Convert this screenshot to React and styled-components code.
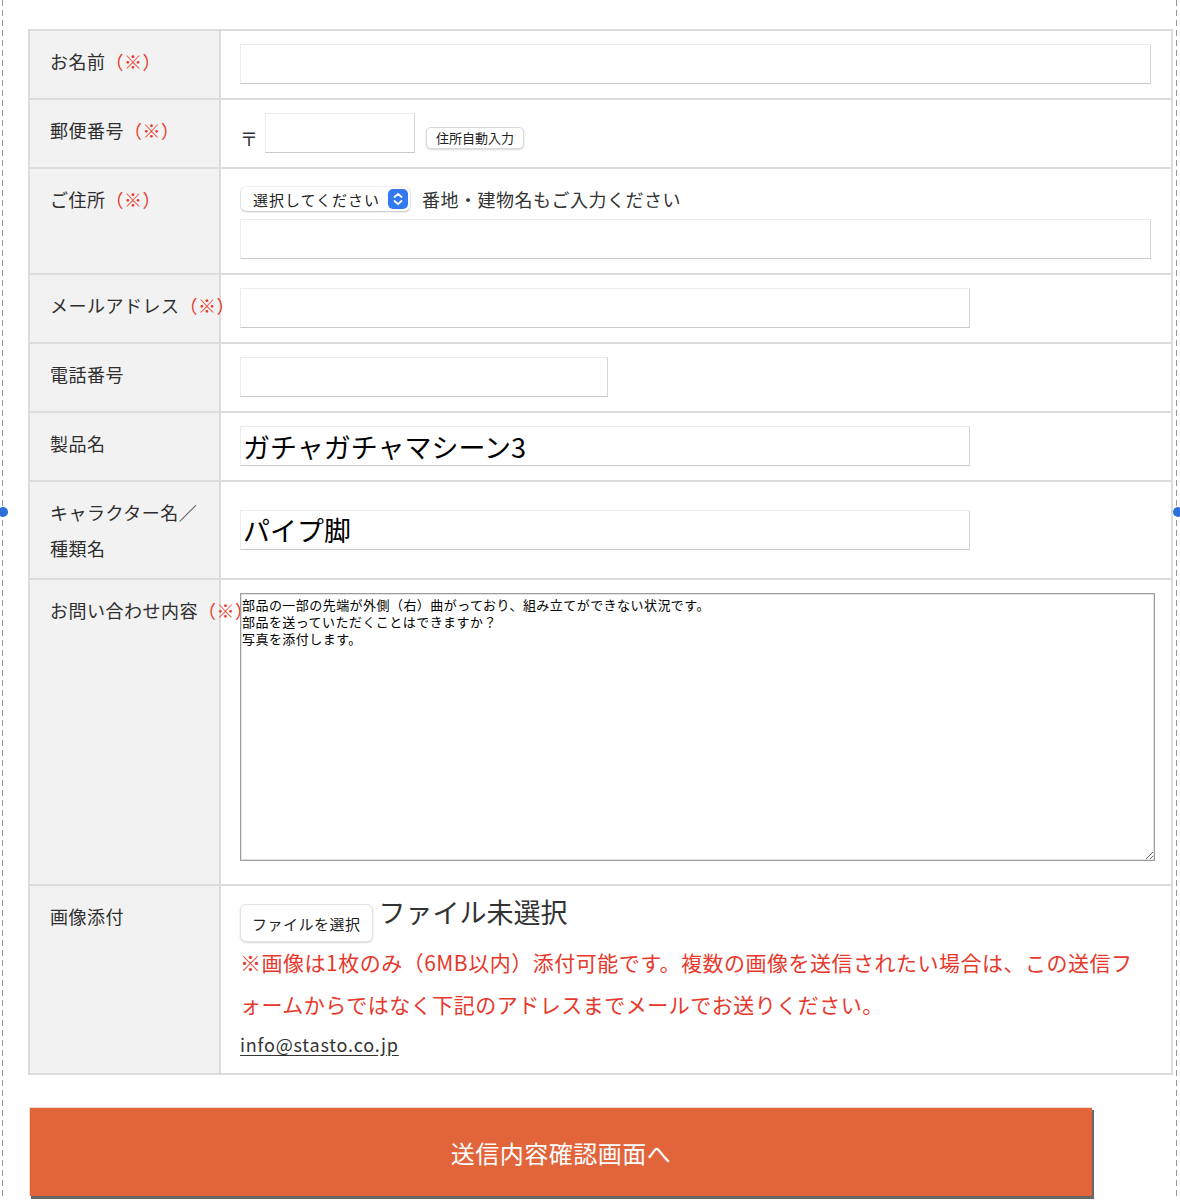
import React from "react";
import styled, { createGlobalStyle } from "styled-components";

const GlobalStyle = createGlobalStyle`
  html, body {
    margin: 0;
    padding: 0;
    background: #fff;
  }
  body {
    font-family: "Noto Sans CJK JP", "Noto Sans", sans-serif;
    color: #333;
  }
`;

const Page = styled.div`
  position: relative;
  box-sizing: border-box;
  width: 1175px;
  min-height: 1200px;
  margin-left: 2px;
  padding: 29px 0 0 26px;
  background:
    linear-gradient(#9a9a9a 60%, transparent 0) left top / 1px 10px repeat-y,
    linear-gradient(#9a9a9a 60%, transparent 0) right top / 1px 10px repeat-y;
`;

const Handle = styled.span`
  position: absolute;
  top: 507px;
  left: ${(p) => (p.$right ? "1171px" : "-4px")};
  width: 10px;
  height: 10px;
  border-radius: 50%;
  background: #2d6fd8;
`;

const FormTable = styled.div`
  box-sizing: border-box;
  width: 1145px;
  border-top: 2px solid #dcdcdc;
  border-left: 2px solid #dcdcdc;
  border-right: 2px solid #dcdcdc;
`;

const Row = styled.div`
  display: grid;
  grid-template-columns: 191px 1fr;
  border-bottom: 2px solid #dcdcdc;
`;

const Label = styled.div`
  box-sizing: border-box;
  background: #f2f2f2;
  border-right: 2px solid #dcdcdc;
  padding: 12px 20px;
  font-size: 18px;
  line-height: 36px;
  letter-spacing: 0.5px;
  color: #2e2e2e;
  white-space: nowrap;
  position: relative;
  z-index: 0;
`;

const Req = styled.span`
  color: #e8382b;
`;

const Cell = styled.div`
  padding: 13px 20px 14px 19px;
  display: flex;
  flex-direction: column;
  justify-content: ${(p) => (p.$top ? "flex-start" : "center")};
  align-items: flex-start;
  position: relative;
  z-index: 1;
  min-width: 0;
`;

const Inline = styled.div`
  display: flex;
  align-items: ${(p) => p.$align || "center"};
`;

const TextInput = styled.input`
  box-sizing: border-box;
  width: ${(p) => p.$w || "100%"};
  height: 40px;
  margin: 0;
  padding: 0 2px;
  border: 1px solid #ececec;
  border-bottom-color: #c9c9c9;
  border-right-color: #d6d6d6;
  background: #fff;
  font-family: "Noto Sans CJK JP", sans-serif;
  font-size: ${(p) => p.$fs || 18}px;
  color: #000;
  outline: none;
`;

const Postal = styled.span`
  font-size: 18px;
  line-height: 18px;
  margin: 0 7px 6px 0;
  color: #333;
`;

const SmallButton = styled.button`
  margin: 0 0 4px 11px;
  height: 22px;
  padding: 0 9px;
  border: 1px solid #d9d9d9;
  border-radius: 5px;
  background: #fff;
  box-shadow: 0 1px 2px rgba(0, 0, 0, 0.15);
  font-family: "Noto Sans CJK JP", sans-serif;
  font-size: 13px;
  color: #222;
  line-height: 20px;
`;

const SelectBox = styled.div`
  box-sizing: border-box;
  display: flex;
  align-items: center;
  justify-content: space-between;
  height: 24px;
  width: 169px;
  margin-left: 1px;
  padding: 0 2px 0 12px;
  border-radius: 5px;
  background: #fff;
  box-shadow: 0 0 0 0.5px rgba(0, 0, 0, 0.12), 0 1px 2px rgba(0, 0, 0, 0.2);
  font-size: 15px;
  letter-spacing: 1px;
  color: #222;
`;

const Stepper = styled.span`
  display: flex;
  align-items: center;
  justify-content: center;
  width: 20px;
  height: 20px;
  border-radius: 5px;
  background: #3579f0;
`;

const Note = styled.span`
  margin-left: 12px;
  font-size: 18px;
  letter-spacing: 0.5px;
  color: #333;
`;

const AddressLine = styled.div`
  display: flex;
  align-items: center;
  height: 34px;
  margin-bottom: 3px;
`;

const TextArea = styled.textarea`
  display: block;
  box-sizing: border-box;
  width: 915px;
  height: 268px;
  margin: 0 0 9px 0;
  padding: 2px 1px;
  border: 1px solid #9d9d9d;
  box-shadow: inset 0 0 0 1px #e2e2e2;
  font-family: "Noto Sans CJK JP", sans-serif;
  font-size: 13px;
  line-height: 17px;
  letter-spacing: 0.45px;
  color: #000;
  resize: both;
  outline: none;
`;

const FileButton = styled.button`
  height: 38px;
  margin-top: 5px;
  padding: 0 11px;
  border: 1px solid #e2e2e2;
  border-radius: 6px;
  background: #fff;
  box-shadow: 0 1px 2px rgba(0, 0, 0, 0.15);
  font-family: "Noto Sans CJK JP", sans-serif;
  font-size: 15px;
  letter-spacing: 0.5px;
  color: #222;
`;

const FileStatus = styled.span`
  margin-left: 6px;
  font-size: 27px;
  line-height: 26px;
  color: #333;
`;

const Warning = styled.p`
  margin: -1px 0 0 0;
  font-size: 21px;
  line-height: 42px;
  letter-spacing: 0.5px;
  color: #e8382b;
`;

const Mail = styled.a`
  margin-top: 4px;
  font-size: 18px;
  line-height: 30px;
  letter-spacing: 0.8px;
  color: #333;
  text-decoration: underline;
  text-underline-offset: 3px;
`;

const Submit = styled.button`
  display: block;
  box-sizing: border-box;
  width: 1063px;
  height: 89px;
  margin: 32px 0 0 1px;
  border: none;
  border-top: 1px solid #f7d8cc;
  border-left: 1px solid #f7d8cc;
  background: #e2643a;
  box-shadow: 2px 3px 0 #666;
  font-family: "Noto Sans CJK JP", sans-serif;
  font-size: 24px;
  color: #fff;
  letter-spacing: 0.5px;
`;

const Chevrons = () => (
  <svg width="14" height="16" viewBox="0 0 14 16" fill="none">
    <path d="M3.5 6 L7 2.8 L10.5 6" stroke="#fff" strokeWidth="1.8" strokeLinecap="round" strokeLinejoin="round" />
    <path d="M3.5 10 L7 13.2 L10.5 10" stroke="#fff" strokeWidth="1.8" strokeLinecap="round" strokeLinejoin="round" />
  </svg>
);

const message =
  "部品の一部の先端が外側（右）曲がっており、組み立てができない状況です。\n部品を送っていただくことはできますか？\n写真を添付します。";

export default function App() {
  return (
    <>
      <GlobalStyle />
      <Page>
        <Handle />
        <Handle $right />
        <FormTable>
          <Row>
            <Label>
              お名前<Req>（※）</Req>
            </Label>
            <Cell>
              <TextInput />
            </Cell>
          </Row>
          <Row>
            <Label>
              郵便番号<Req>（※）</Req>
            </Label>
            <Cell>
              <Inline $align="flex-end">
                <Postal>〒</Postal>
                <TextInput $w="150px" />
                <SmallButton type="button">住所自動入力</SmallButton>
              </Inline>
            </Cell>
          </Row>
          <Row>
            <Label>
              ご住所<Req>（※）</Req>
            </Label>
            <Cell>
              <AddressLine>
                <SelectBox>
                  <span>選択してください</span>
                  <Stepper>
                    <Chevrons />
                  </Stepper>
                </SelectBox>
                <Note>番地・建物名もご入力ください</Note>
              </AddressLine>
              <TextInput />
            </Cell>
          </Row>
          <Row>
            <Label>
              メールアドレス<Req>（※）</Req>
            </Label>
            <Cell>
              <TextInput $w="730px" />
            </Cell>
          </Row>
          <Row>
            <Label>電話番号</Label>
            <Cell>
              <TextInput $w="368px" />
            </Cell>
          </Row>
          <Row>
            <Label>製品名</Label>
            <Cell>
              <TextInput $w="730px" $fs={27} defaultValue="ガチャガチャマシーン3" />
            </Cell>
          </Row>
          <Row>
            <Label>
              キャラクター名／
              <br />
              種類名
            </Label>
            <Cell>
              <TextInput $w="730px" $fs={27} defaultValue="パイプ脚" />
            </Cell>
          </Row>
          <Row>
            <Label>
              お問い合わせ内容<Req>（※）</Req>
            </Label>
            <Cell $top>
              <TextArea defaultValue={message} />
            </Cell>
          </Row>
          <Row>
            <Label>画像添付</Label>
            <Cell>
              <Inline $align="flex-start">
                <FileButton type="button">ファイルを選択</FileButton>
                <FileStatus>ファイル未選択</FileStatus>
              </Inline>
              <Warning>
                ※画像は1枚のみ（6MB以内）添付可能です。複数の画像を送信されたい場合は、この送信フ
                <br />
                ォームからではなく下記のアドレスまでメールでお送りください。
              </Warning>
              <Mail href="#">info@stasto.co.jp</Mail>
            </Cell>
          </Row>
        </FormTable>
        <Submit type="button">送信内容確認画面へ</Submit>
      </Page>
    </>
  );
}
